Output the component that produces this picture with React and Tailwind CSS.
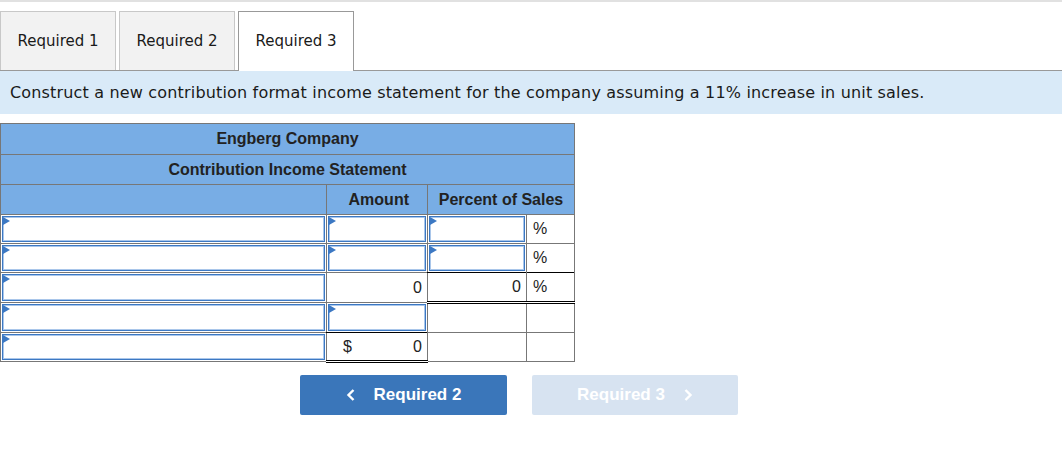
import React from "react";

const ARIAL = { fontFamily: '"Liberation Sans", Arial, sans-serif' };

function Flag() {
  return (
    <span className="absolute left-0 top-0 w-0 h-0 border-t-[4px] border-b-[4px] border-l-[7px] border-t-transparent border-b-transparent border-l-[#3c78c3]" />
  );
}

function Field() {
  return (
    <div className="relative h-full w-full bg-white border border-[#3c78c3] shadow-[inset_0_0_0_1px_#a9c6ea]">
      <Flag />
    </div>
  );
}

const cell = "border border-[#777] p-0";

export default function App() {
  return (
    <div className="w-[1062px] h-[450px] bg-white" style={{ fontFamily: '"DejaVu Sans", Verdana, sans-serif' }}>
      <div className="h-[2px] bg-[#e1e1e1]" />
      <div className="flex gap-[3px] pt-[9px] border-b border-[#999] h-[69px] text-[15px] text-[#1a1a1a]">
        <div className="w-[116px] h-[59px] flex items-center justify-center bg-[#f2f2f2] border border-b-0 border-[#c8c8c8]">Required 1</div>
        <div className="w-[116px] h-[59px] flex items-center justify-center bg-[#f2f2f2] border border-b-0 border-[#c8c8c8]">Required 2</div>
        <div className="w-[116px] h-[60px] -mb-px flex items-center justify-center bg-white border border-b-0 border-[#999]">Required 3</div>
      </div>
      <div className="h-[43px] bg-[#d9eaf8] flex items-center pl-[10px] text-[16px] tracking-[0.17px] text-[#1a1a1a]">
        Construct a new contribution format income statement for the company assuming a 11% increase in unit sales.
      </div>

      <table className="mt-[9px] border-collapse w-[575px] text-[16px] text-[#222]" style={ARIAL}>
        <colgroup>
          <col className="w-[326px]" />
          <col className="w-[101px]" />
          <col className="w-[99px]" />
          <col className="w-[48px]" />
        </colgroup>
        <tbody>
          <tr className="h-[31px] bg-[#78ade5]">
            <td colSpan={4} className={`${cell} text-center font-bold`}>Engberg Company</td>
          </tr>
          <tr className="h-[30px] bg-[#78ade5]">
            <td colSpan={4} className={`${cell} text-center font-bold`}>Contribution Income Statement</td>
          </tr>
          <tr className="h-[30px] bg-[#78ade5] font-bold">
            <td className={cell} />
            <td className={`${cell} text-right pr-[18px]`}>Amount</td>
            <td colSpan={2} className={`${cell} text-center`}>Percent of Sales</td>
          </tr>
          {[0, 1].map((i) => (
            <tr key={i} className="h-[29px]">
              <td className={`${cell} p-px h-[29px]`}><Field /></td>
              <td className={`${cell} p-px h-[29px]`}><Field /></td>
              <td className={`${cell} p-px h-[29px]`}><Field /></td>
              <td className={`${cell} pl-[6px]`}>%</td>
            </tr>
          ))}
          <tr className="h-[30px]">
            <td className={`${cell} p-px h-[30px]`}><Field /></td>
            <td className={`${cell} border-t-black text-right pr-[5px]`}>0</td>
            <td className={`${cell} border-t-black border-b-[3px] border-b-black border-double text-right pr-[5px]`}>0</td>
            <td className={`${cell} border-t-black border-b-[3px] border-b-black border-double pl-[6px]`}>%</td>
          </tr>
          <tr className="h-[30px]">
            <td className={`${cell} p-px h-[30px]`}><Field /></td>
            <td className={`${cell} p-px h-[30px]`}><Field /></td>
            <td className={cell} />
            <td className={cell} />
          </tr>
          <tr className="h-[29px]">
            <td className={`${cell} p-px h-[29px]`}><Field /></td>
            <td className={`${cell} border-t-black border-b-[3px] border-b-black border-double`}>
              <div className="flex justify-between pl-[16px] pr-[5px]"><span>$</span><span>0</span></div>
            </td>
            <td className={cell} />
            <td className={cell} />
          </tr>
        </tbody>
      </table>

      <div className="flex gap-[25px] pl-[300px] pt-[12px]" style={ARIAL}>
        <button className="w-[207px] h-[40px] rounded-[2px] bg-[#3a76ba] text-white font-bold text-[17px] flex items-center justify-center gap-[18px]">
          <svg width="10" height="14" viewBox="0 0 10 14"><path d="M7.5 2 L2.5 7 L7.5 12" fill="none" stroke="white" strokeWidth="2.4" /></svg>
          Required 2
        </button>
        <button className="w-[206px] h-[40px] rounded-[2px] bg-[#d7e3f1] text-white font-bold text-[17px] flex items-center justify-center gap-[18px]">
          Required 3
          <svg width="10" height="14" viewBox="0 0 10 14"><path d="M2.5 2 L7.5 7 L2.5 12" fill="none" stroke="white" strokeWidth="2.4" /></svg>
        </button>
      </div>
    </div>
  );
}
